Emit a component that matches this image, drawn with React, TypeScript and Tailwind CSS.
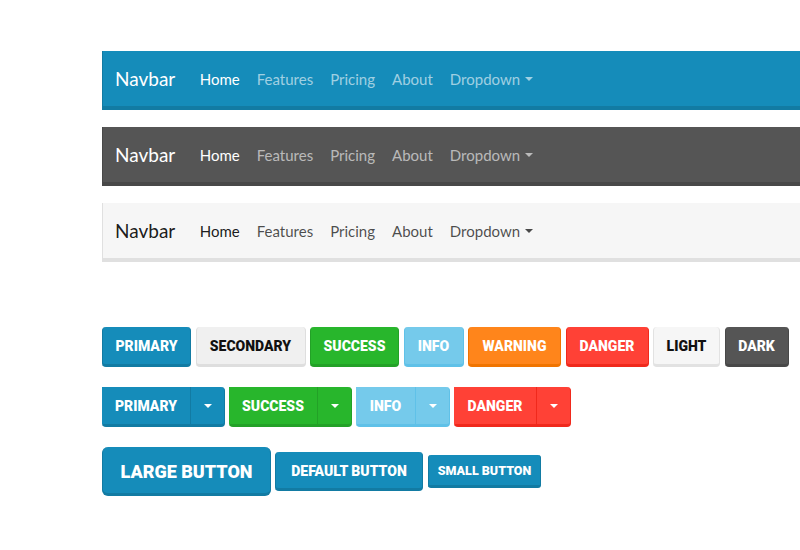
import React from 'react';

const FONT = { fontFamily: 'Lato, "Open Sans", sans-serif' };
const BTN_FONT = { fontFamily: 'Roboto, Lato, sans-serif' };

type Variant = {
  label: string;
  bg: string;
  width: string;
};

const navLinks = ['Home', 'Features', 'Pricing', 'About'];

const Caret = ({ className }: { className: string }) => (
  <span className={`inline-block w-0 h-0 border-x-[4px] border-x-transparent border-t-[4px] ${className}`} />
);

const Navbar = ({
  bar,
  brand,
  active,
  link,
  caret,
}: {
  bar: string;
  brand: string;
  active: string;
  link: string;
  caret: string;
}) => (
  <nav className={`h-[59px] flex items-center pl-[12px] pt-[1px] border-l border-b-4 ${bar}`}>
    <span className={`text-[19px] mr-[16px] ${brand}`}>Navbar</span>
    {navLinks.map((l, i) => (
      <span key={l} className={`px-[8.5px] text-[15px] ${i === 0 ? active : link}`}>
        {l}
      </span>
    ))}
    <span className={`px-[8.5px] text-[15px] flex items-center gap-[5px] ${link}`}>
      Dropdown
      <Caret className={caret} />
    </span>
  </nav>
);

const buttons: Variant[] = [
  { label: 'Primary', bg: 'bg-[#158cba] border-[#127ba3] text-white', width: 'w-[89px]' },
  { label: 'Secondary', bg: 'bg-[#f0f0f0] border-[#dedede] text-[#111]', width: 'w-[110px]' },
  { label: 'Success', bg: 'bg-[#28b62c] border-[#23a127] text-white', width: 'w-[89px]' },
  { label: 'Info', bg: 'bg-[#75caeb] border-[#5fc1e8] text-white', width: 'w-[60px]' },
  { label: 'Warning', bg: 'bg-[#ff851b] border-[#f07400] text-white', width: 'w-[93px]' },
  { label: 'Danger', bg: 'bg-[#ff4136] border-[#f0291c] text-white', width: 'w-[83px]' },
  { label: 'Light', bg: 'bg-[#f6f6f6] border-[#e2e2e2] text-[#111]', width: 'w-[67px]' },
  { label: 'Dark', bg: 'bg-[#555555] border-[#484848] text-white', width: 'w-[64px]' },
];

const splits = [buttons[0], buttons[2], buttons[3], buttons[5]];

export default function App() {
  return (
    <div className="min-h-[550px] bg-white overflow-hidden pl-[102px] pt-[51px]" style={FONT}>
      <div className="flex flex-col gap-[17px] w-[720px]">
        <Navbar
          bar="bg-[#158cba] border-[#127ba3]"
          brand="text-white"
          active="text-white"
          link="text-white/60"
          caret="border-t-white/60"
        />
        <Navbar
          bar="bg-[#555555] border-[#484848]"
          brand="text-white"
          active="text-white"
          link="text-white/60"
          caret="border-t-white/60"
        />
        <Navbar
          bar="bg-[#f6f6f6] border-[#e0e0e0]"
          brand="text-black/90"
          active="text-black/90"
          link="text-black/70"
          caret="border-t-black/70"
        />
      </div>

      <div className="mt-[65px] flex flex-col gap-[20px]" style={BTN_FONT}>
        <div className="flex gap-[4.5px]">
          {buttons.map((b) => (
            <button
              key={b.label}
              className={`h-[40px] ${b.width} pt-[2px] rounded-[4px] border-x border-b-[3px] uppercase font-black text-[14px] ${b.bg}`}
            >
              {b.label}
            </button>
          ))}
        </div>

        <div className="flex gap-[4px]">
          {splits.map((b) => (
            <div key={b.label} className={`flex h-[40px] rounded-[4px] border-x border-b-[3px] ${b.bg}`}>
              <span className={`${b.width} -ml-px pt-[2px] flex items-center justify-center uppercase font-black text-[14px] border-r ${b.bg}`}>
                {b.label}
              </span>
              <span className="w-[33px] pt-[1px] flex items-center justify-center">
                <Caret className="border-t-white" />
              </span>
            </div>
          ))}
        </div>

        <div className="flex items-center gap-[4px]">
          <button className="h-[49px] w-[169px] pt-[2px] rounded-[6px] border-x border-b-[3px] bg-[#158cba] border-[#127ba3] text-white uppercase font-black text-[18px]">
            Large button
          </button>
          <button className="h-[39px] w-[148px] pt-[2px] rounded-[4px] border-x border-b-[3px] bg-[#158cba] border-[#127ba3] text-white uppercase font-black text-[14px]">
            Default button
          </button>
          <button className="ml-[1px] h-[33px] w-[113px] pt-[2px] rounded-[3px] border-x border-b-[3px] bg-[#158cba] border-[#127ba3] text-white uppercase font-black text-[12.5px]">
            Small button
          </button>
        </div>
      </div>
    </div>
  );
}
